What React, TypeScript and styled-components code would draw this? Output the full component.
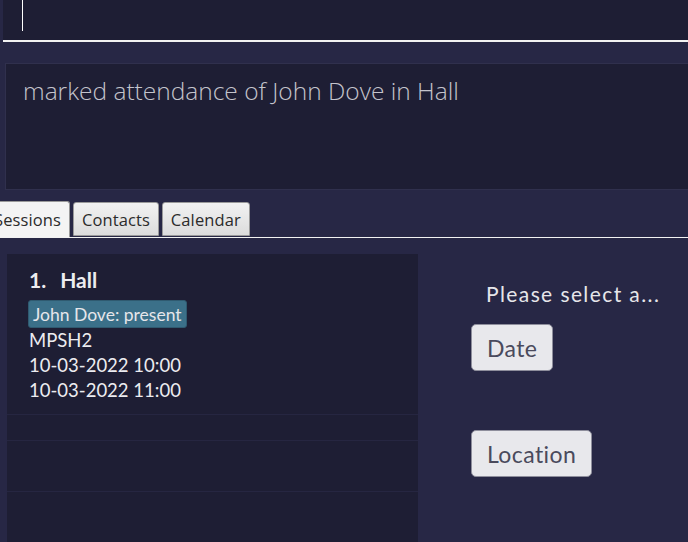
import React from "react";
import styled, { createGlobalStyle } from "styled-components";

const Global = createGlobalStyle`
  html, body { margin: 0; padding: 0; background: #272745; }
  #root { width: 688px; height: 542px; overflow: hidden; }
`;

const Page = styled.div`
  width: 688px;
  height: 542px;
  background: #272745;
  display: flex;
  flex-direction: column;
  overflow: hidden;
`;

const CommandBox = styled.div`
  margin-left: 3px;
  height: 40px;
  background: #1e1e34;
  border-bottom: 2px solid #f2f2f2;
  padding-left: 19px;
  display: flex;
  align-items: flex-start;
`;

const Caret = styled.div`
  width: 1px;
  height: 31px;
  background: #ffffff;
`;

const ResultBox = styled.div`
  margin: 21px 0 0 5px;
  height: 127px;
  background: #1e1e34;
  border: 1px solid #30304d;
  border-right: none;
  padding: 11px 17px;
  box-sizing: border-box;
  font-family: "Open Sans", "Liberation Sans", sans-serif;
  font-weight: 300;
  font-size: 24.5px;
  color: #c4c4cc;
  line-height: 32px;
`;

const TabBar = styled.div`
  margin-top: 11px;
  display: flex;
  gap: 3px;
  margin-left: -15px;
  height: 36px;
  align-items: flex-end;
  border-bottom: 1px solid #f2f2f2;
`;

const Tab = styled.div<{ $active?: boolean }>`
  height: ${(p) => (p.$active ? 36 : 34)}px;
  margin-bottom: ${(p) => (p.$active ? 0 : 1)}px;
  box-sizing: border-box;
  padding: 0 8px;
  display: flex;
  align-items: center;
  border: 1px solid #9a9a9a;
  border-bottom: ${(p) => (p.$active ? "none" : "1px solid #9a9a9a")};
  border-radius: 3px 3px 0 0;
  background: ${(p) =>
    p.$active ? "#f4f4f4" : "linear-gradient(#f2f2f2, #dcdcdc)"};
  font-family: "Open Sans", "Liberation Sans", sans-serif;
  font-size: 16.5px;
  letter-spacing: 0.1px;
  color: #2b2b2b;
`;

const Content = styled.div`
  flex: 1;
  display: flex;
  padding: 16px 0 0 7px;
  min-height: 0;
`;

const ListPanel = styled.div`
  width: 411px;
  background: #1e1e34;
  display: flex;
  flex-direction: column;
  overflow: hidden;
`;

const Cell = styled.div<{ $h: number }>`
  flex-shrink: 0;
  height: ${(p) => p.$h}px;
  box-sizing: border-box;
  border-bottom: 1px solid #262641;
`;

const SessionCell = styled.div`
  flex-shrink: 0;
  height: 161px;
  box-sizing: border-box;
  border-bottom: 1px solid #262641;
  padding: 11px 0 0 22px;
  font-family: "Lato", "Liberation Sans", sans-serif;
  color: #ececf0;
  display: flex;
  flex-direction: column;
  align-items: flex-start;
`;

const Title = styled.div`
  font-size: 21px;
  font-weight: bold;
  display: flex;
  gap: 14px;
  line-height: 30px;
`;

const Badge = styled.div`
  margin-top: 5px;
  margin-left: -1px;
  background: #3b7089;
  border: 1px solid #2f5a70;
  border-radius: 3px;
  padding: 0 4px;
  height: 28px;
  box-sizing: border-box;
  display: flex;
  align-items: center;
  font-size: 17.5px;
  color: #e6e6ea;
`;

const Line = styled.div`
  font-size: 18.5px;
  line-height: 25px;
`;

const SidePane = styled.div`
  flex: 1;
  display: flex;
  flex-direction: column;
  align-items: flex-start;
  padding: 26px 0 0 53px;
  font-family: "Lato", "Liberation Sans", sans-serif;
`;

const Prompt = styled.div`
  margin-left: 15px;
  font-size: 21px;
  color: #e6e6ea;
  line-height: 28px;
  letter-spacing: 1.4px;
`;

const SelectButton = styled.div<{ $top: number }>`
  margin-top: ${(p) => p.$top}px;
  height: 47px;
  box-sizing: border-box;
  padding: 0 15px;
  display: flex;
  align-items: center;
  background: #e8e8ec;
  border: 1px solid #8e8e9c;
  border-radius: 5px;
  font-size: 23px;
  letter-spacing: 0.4px;
  color: #4a4a5c;
`;

export default function App() {
  return (
    <Page>
      <Global />
      <CommandBox>
        <Caret />
      </CommandBox>
      <ResultBox>marked attendance of John Dove in Hall</ResultBox>
      <TabBar>
        <Tab $active>Sessions</Tab>
        <Tab>Contacts</Tab>
        <Tab>Calendar</Tab>
      </TabBar>
      <Content>
        <ListPanel>
          <SessionCell>
            <Title>
              <span>1.</span>
              <span>Hall</span>
            </Title>
            <Badge>John Dove: present</Badge>
            <Line>MPSH2</Line>
            <Line>10-03-2022 10:00</Line>
            <Line>10-03-2022 11:00</Line>
          </SessionCell>
          <Cell $h={26} />
          <Cell $h={51} />
          <Cell $h={60} />
        </ListPanel>
        <SidePane>
          <Prompt>Please select a...</Prompt>
          <SelectButton $top={16}>Date</SelectButton>
          <SelectButton $top={59}>Location</SelectButton>
        </SidePane>
      </Content>
    </Page>
  );
}
